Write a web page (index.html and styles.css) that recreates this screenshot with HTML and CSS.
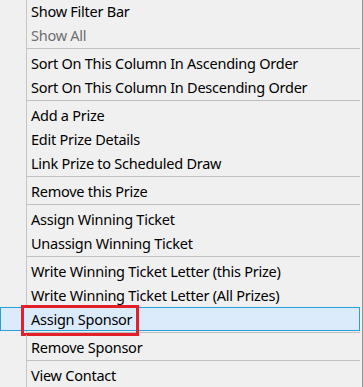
FILE: index.html
```html
<!DOCTYPE html>
<html>
<head>
<meta charset="utf-8">
<link rel="stylesheet" href="styles.css">
</head>
<body>
<div class="menu">
  <div class="item"><span class="gutter"></span><span class="label">Show Filter Bar</span></div>
  <div class="item disabled"><span class="gutter"></span><span class="label">Show All</span></div>
  <div class="sep"><span class="gutter"></span><span class="line"></span></div>
  <div class="item"><span class="gutter"></span><span class="label">Sort On This Column In Ascending Order</span></div>
  <div class="item"><span class="gutter"></span><span class="label">Sort On This Column In Descending Order</span></div>
  <div class="sep"><span class="gutter"></span><span class="line"></span></div>
  <div class="item"><span class="gutter"></span><span class="label">Add a Prize</span></div>
  <div class="item"><span class="gutter"></span><span class="label">Edit Prize Details</span></div>
  <div class="item"><span class="gutter"></span><span class="label">Link Prize to Scheduled Draw</span></div>
  <div class="sep"><span class="gutter"></span><span class="line"></span></div>
  <div class="item"><span class="gutter"></span><span class="label">Remove this Prize</span></div>
  <div class="sep"><span class="gutter"></span><span class="line"></span></div>
  <div class="item"><span class="gutter"></span><span class="label">Assign Winning Ticket</span></div>
  <div class="item"><span class="gutter"></span><span class="label">Unassign Winning Ticket</span></div>
  <div class="sep"><span class="gutter"></span><span class="line"></span></div>
  <div class="item"><span class="gutter"></span><span class="label">Write Winning Ticket Letter (this Prize)</span></div>
  <div class="item"><span class="gutter"></span><span class="label">Write Winning Ticket Letter (All Prizes)</span></div>
  <div class="item active"><span class="gutter"></span><span class="label">Assign Sponsor</span><span class="callout"></span></div>
  <div class="sep"><span class="gutter"></span><span class="line"></span></div>
  <div class="item"><span class="gutter"></span><span class="label">Remove Sponsor</span></div>
  <div class="sep"><span class="gutter"></span><span class="line"></span></div>
  <div class="item"><span class="gutter"></span><span class="label">View Contact</span></div>
</div>
</body>
</html>
```
FILE: styles.css
```css
html, body {
  margin: 0;
  padding: 0;
  background: #f0f0f0;
  overflow: hidden;
}
.menu {
  width: 360px;
  margin-top: -1px;
  padding-right: 2px;
  border-right: 1px solid #979797;
  font-family: "Noto Sans", "Open Sans", sans-serif;
  font-size: 14.5px;
  letter-spacing: -0.25px;
  color: #000;
  display: flex;
  flex-direction: column;
}
.item {
  position: relative;
  display: flex;
  height: 24px;
  box-sizing: border-box;
  align-items: center;
}
.gutter {
  width: 26px;
  height: 100%;
  border-right: 1px solid #c5c5c5;
  flex: none;
}
.label {
  padding-left: 4px;
  white-space: nowrap;
  line-height: 24px;
}
.disabled .label {
  color: #6d6d6d;
}
.sep {
  display: flex;
  height: 4px;
}
.sep .line {
  flex: 1;
  height: 1px;
  margin-top: 1px;
  background: #bfbfbf;
}
.active {
  background: #dcebfc;
  border: 1px solid #26a0da;
}
.active .gutter {
  width: 25px;
  border-right-color: transparent;
}
.callout {
  position: absolute;
  left: 20px;
  top: -3px;
  width: 112px;
  height: 25px;
  border: 3px solid #e3202a;
}
```
